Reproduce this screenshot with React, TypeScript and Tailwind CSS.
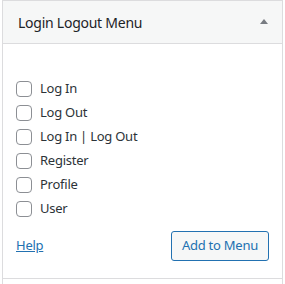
const ITEMS = ['Log In', 'Log Out', 'Log In | Log Out', 'Register', 'Profile', 'User'];

export default function App() {
  return (
    <div
      className="h-[284px] w-[285px] overflow-hidden bg-white text-[13px] tracking-[-0.25px] text-[#2c3338]"
      style={{ fontFamily: '"Noto Sans", "Open Sans", sans-serif' }}
    >
      <div className="ml-[2px] w-[281px] border-x border-t border-[#dcdcde]">
        <div className="flex h-[43px] items-center justify-between border-b border-[#dcdcde] bg-[#f6f7f7] pl-[15px] pr-[14px]">
          <h3 className="text-[14px] text-[#1d2327]">Login Logout Menu</h3>
          <svg width="8" height="5" viewBox="0 0 8 5" className="mb-[2px]">
            <path d="M4 0 L8 5 L0 5 Z" fill="#787c82" />
          </svg>
        </div>
        <div className="px-[13px] pb-[17px] pt-[33px]">
          <ul>
            {ITEMS.map((item) => (
              <li key={item} className="flex h-[24px] items-center gap-[8px]">
                <span className="h-[16px] w-[16px] shrink-0 rounded-[4px] border border-[#8c8f94] bg-white" />
                <span>{item}</span>
              </li>
            ))}
          </ul>
          <div className="mt-[10px] flex items-center justify-between">
            <a href="#" className="text-[#2271b1] underline">
              Help
            </a>
            <button
              type="button"
              className="h-[30px] rounded-[3px] border border-[#2271b1] bg-[#f6f7f7] px-[10px] text-[13px] text-[#2271b1]"
            >
              Add to Menu
            </button>
          </div>
        </div>
        <div className="h-[10px] border-t border-[#dcdcde]" />
      </div>
    </div>
  );
}
